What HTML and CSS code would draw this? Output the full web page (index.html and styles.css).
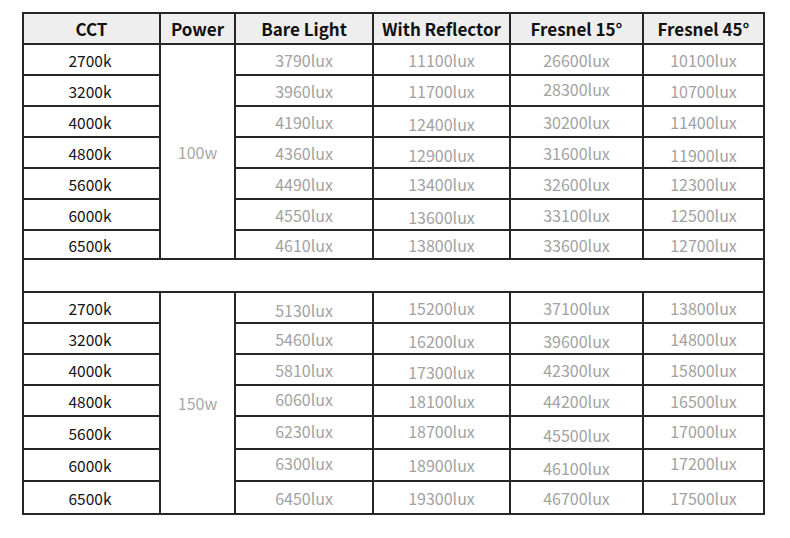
FILE: index.html
```html
<!DOCTYPE html>
<html>
<head>
<meta charset="utf-8">
<link rel="stylesheet" href="styles.css">
</head>
<body>
<div class="page">
<table class="spec">
  <colgroup>
    <col class="c-cct"><col class="c-pow"><col class="c-bare"><col class="c-refl"><col class="c-f15"><col class="c-f45">
  </colgroup>
  <thead>
    <tr class="head">
      <th>CCT</th><th>Power</th><th>Bare Light</th><th>With Reflector</th><th>Fresnel 15°</th><th>Fresnel 45°</th>
    </tr>
  </thead>
  <tbody>
    <tr class="r31"><td class="cct">2700k</td><td class="pow" rowspan="7">100w</td><td>3790lux</td><td>11100lux</td><td>26600lux</td><td>10100lux</td></tr>
    <tr class="r31"><td class="cct">3200k</td><td>3960lux</td><td>11700lux</td><td class="up">28300lux</td><td>10700lux</td></tr>
    <tr class="r31"><td class="cct">4000k</td><td>4190lux</td><td class="dn">12400lux</td><td>30200lux</td><td>11400lux</td></tr>
    <tr class="r31"><td class="cct">4800k</td><td>4360lux</td><td class="dn">12900lux</td><td>31600lux</td><td class="dn">11900lux</td></tr>
    <tr class="r31"><td class="cct">5600k</td><td>4490lux</td><td>13400lux</td><td>32600lux</td><td>12300lux</td></tr>
    <tr class="r31"><td class="cct">6000k</td><td>4550lux</td><td class="dn">13600lux</td><td>33100lux</td><td>12500lux</td></tr>
    <tr class="r29"><td class="cct">6500k</td><td>4610lux</td><td>13800lux</td><td>33600lux</td><td>12700lux</td></tr>
    <tr class="gap"><td colspan="6"></td></tr>
    <tr class="r31"><td class="cct">2700k</td><td class="pow" rowspan="7">150w</td><td class="dn">5130lux</td><td>15200lux</td><td>37100lux</td><td>13800lux</td></tr>
    <tr class="r31"><td class="cct">3200k</td><td>5460lux</td><td class="dn">16200lux</td><td class="dn">39600lux</td><td>14800lux</td></tr>
    <tr class="r31"><td class="cct">4000k</td><td>5810lux</td><td class="dn">17300lux</td><td>42300lux</td><td>15800lux</td></tr>
    <tr class="r31"><td class="cct">4800k</td><td class="up">6060lux</td><td>18100lux</td><td>44200lux</td><td>16500lux</td></tr>
    <tr class="r33"><td class="cct">5600k</td><td class="up">6230lux</td><td class="up">18700lux</td><td class="dn">45500lux</td><td class="up">17000lux</td></tr>
    <tr class="r32"><td class="cct">6000k</td><td class="up">6300lux</td><td>18900lux</td><td class="dn">46100lux</td><td class="up">17200lux</td></tr>
    <tr class="r33"><td class="cct">6500k</td><td>6450lux</td><td>19300lux</td><td>46700lux</td><td>17500lux</td></tr>
  </tbody>
</table>
</div>
</body>
</html>
```

FILE: styles.css
```css
html, body {
  margin: 0;
  padding: 0;
  background: #ffffff;
}

.page {
  padding: 12px 0 0 22px;
  font-family: "Noto Sans CJK SC", "Noto Sans", sans-serif;
}

.spec {
  border-collapse: collapse;
  table-layout: fixed;
  width: 741px;
}

.c-cct { width: 137px; }
.c-pow { width: 75px; }
.c-bare { width: 138px; }
.c-refl { width: 137px; }
.c-f15 { width: 133px; }
.c-f45 { width: 121px; }

.spec th,
.spec td {
  border: 2px solid #262626;
  padding: 0;
  text-align: center;
  vertical-align: middle;
  line-height: 20px;
}

.head th {
  height: 31px;
  background: #eeeeee;
  color: #111111;
  font-size: 17px;
  font-weight: 700;
  box-sizing: border-box;
}

.spec td {
  font-size: 16px;
  color: #a2a2a2;
  box-sizing: border-box;
}

.spec td.cct {
  font-size: 15.5px;
  color: #141414;
  padding-right: 3px;
}

.spec td.pow {
  color: #a8a8a8;
}

.spec td.dn {
  padding-top: 5px;
}

.spec td.up {
  padding-bottom: 4px;
}

.r29 { height: 29px; }
.r31 { height: 31px; }
.r32 { height: 32px; }
.r33 { height: 33px; }
.gap { height: 33px; }
```
